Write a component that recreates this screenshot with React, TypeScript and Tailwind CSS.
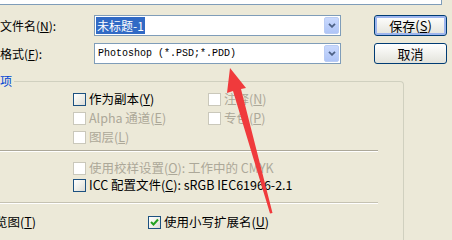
import React from "react"

const cjk = "font-['Noto_Sans_CJK_SC','Noto_Sans',sans-serif]"

function Box({ disabled = false, checked = false }: { disabled?: boolean; checked?: boolean }) {
  return (
    <div
      className={`relative h-[13px] w-[13px] shrink-0 border ${
        disabled
          ? "border-[#CAC8BB] bg-white"
          : "border-[#1C5180] bg-gradient-to-br from-white via-[#F0F0EA] to-[#DCDCD7]"
      }`}
    >
      {checked && (
        <svg viewBox="0 0 11 11" className="absolute inset-0 h-[11px] w-[11px]">
          <path d="M2 5 L4.5 7.5 L9 2.5" fill="none" stroke="#21A121" strokeWidth="2" />
        </svg>
      )}
    </div>
  )
}

function Check({
  label,
  hot,
  rest = "",
  disabled = false,
  checked = false,
}: {
  label: string
  hot: string
  rest?: string
  disabled?: boolean
  checked?: boolean
}) {
  return (
    <div className="flex h-[13px] items-center gap-[3px]">
      <Box disabled={disabled} checked={checked} />
      <span
        className={`whitespace-nowrap text-[12.5px] leading-none ${
          disabled ? "text-[#ACA899]" : "text-black"
        }`}
      >
        {label}(<span className="underline">{hot}</span>){rest}
      </span>
    </div>
  )
}

function Combo({ children, selected = false }: { children: React.ReactNode; selected?: boolean }) {
  return (
    <div className="flex h-[21px] w-[247px] items-center border border-[#7F9DB9] bg-white pl-[1px] pr-[1px]">
      <div className="flex flex-1 items-center">
        {selected ? (
          <span className="bg-[#316AC5] px-[1px] text-[12px] leading-[17px] text-white">{children}</span>
        ) : (
          <span className="pl-[2px] font-['Liberation_Mono',monospace] text-[10px] text-black">{children}</span>
        )}
      </div>
      <div className="flex h-[17px] w-[15px] items-center justify-center rounded-[2px] border border-[#B9CCF4] bg-gradient-to-b from-[#C9D9FD] to-[#AFC5F7]">
        <svg viewBox="0 0 8 5" className="h-[5px] w-[8px]">
          <path d="M1 0.8 L4 3.8 L7 0.8" fill="none" stroke="#4D6185" strokeWidth="1.8" />
        </svg>
      </div>
    </div>
  )
}

function Btn({ children, focus = false }: { children: React.ReactNode; focus?: boolean }) {
  return (
    <div
      className={`flex h-[21px] w-[73px] items-center justify-center rounded-[3px] border border-[#003C74] bg-gradient-to-b from-white to-[#E3E3DB] text-[13px] leading-none text-black ${
        focus ? "shadow-[inset_0_0_0_2px_#9DB5EE]" : ""
      }`}
    >
      {children}
    </div>
  )
}

export default function App() {
  return (
    <div className={`relative h-[240px] w-[452px] overflow-hidden bg-[#ECE9D8] ${cjk}`}>
      <div className="h-[5px] w-[442px] border-b border-r border-[#7F9DB9] bg-white" />

      <div className="mt-[10px] flex">
        <div className="flex flex-col gap-[7px]">
          <div className="flex items-center">
            <span className="w-[94px] text-[12px] leading-none text-black">
              文件名(<span className="underline">N</span>):
            </span>
            <Combo selected>未标题-1</Combo>
          </div>
          <div className="flex items-center">
            <span className="w-[94px] text-[12px] leading-none text-black">
              格式(<span className="underline">F</span>):
            </span>
            <Combo>Photoshop (*.PSD;*.PDD)</Combo>
          </div>
        </div>
        <div className="ml-[33px] flex flex-col gap-[7px]">
          <Btn focus>
            保存(<span className="underline">S</span>)
          </Btn>
          <Btn>取消</Btn>
        </div>
      </div>

      <div className="relative mt-[17px] h-[200px] w-[404px] rounded-tr-[4px] border-r border-t border-[#D0D0BF]">
        <span className="absolute -top-[7px] left-0 bg-[#ECE9D8] pr-[2px] text-[12px] leading-none text-[#0046D5]">
          项
        </span>

        <div className="flex pl-[73px] pt-[11px]">
          <div className="flex w-[135px] flex-col gap-[6px]">
            <Check label="作为副本" hot="Y" />
            <Check label="Alpha 通道" hot="E" disabled />
            <Check label="图层" hot="L" disabled />
          </div>
          <div className="flex flex-col gap-[6px]">
            <Check label="注释" hot="N" disabled />
            <Check label="专色" hot="P" disabled />
          </div>
        </div>

        <div className="mt-[6px] h-[2px] w-[378px] border-b border-t border-b-white border-t-[#ACA899]" />

        <div className="flex flex-col gap-[4px] pl-[73px] pt-[10px]">
          <Check label="使用校样设置" hot="O" rest=":  工作中的 CMYK" disabled />
          <Check label="ICC 配置文件" hot="C" rest=":  sRGB IEC61966-2.1" />
        </div>

        <div className="mt-[10px] h-[2px] w-[378px] border-b border-t border-b-white border-t-[#C5C2B2]" />

        <div className="flex items-center pt-[12px]">
          <div className="flex w-[36px] justify-end overflow-hidden">
            <span className="whitespace-nowrap text-[12.5px] leading-none text-black">
              缩览图(<span className="underline">T</span>)
            </span>
          </div>
          <div className="ml-[112px]">
            <Check label="使用小写扩展名" hot="U" checked />
          </div>
        </div>
      </div>

      <svg className="pointer-events-none absolute left-0 top-0 h-[240px] w-[452px]" viewBox="0 0 452 240">
        <polygon
          points="230,68 246,88 241,89 272.5,213 270,213.5 233,91 227,93"
          fill="#F03A3C"
        />
      </svg>
    </div>
  )
}
